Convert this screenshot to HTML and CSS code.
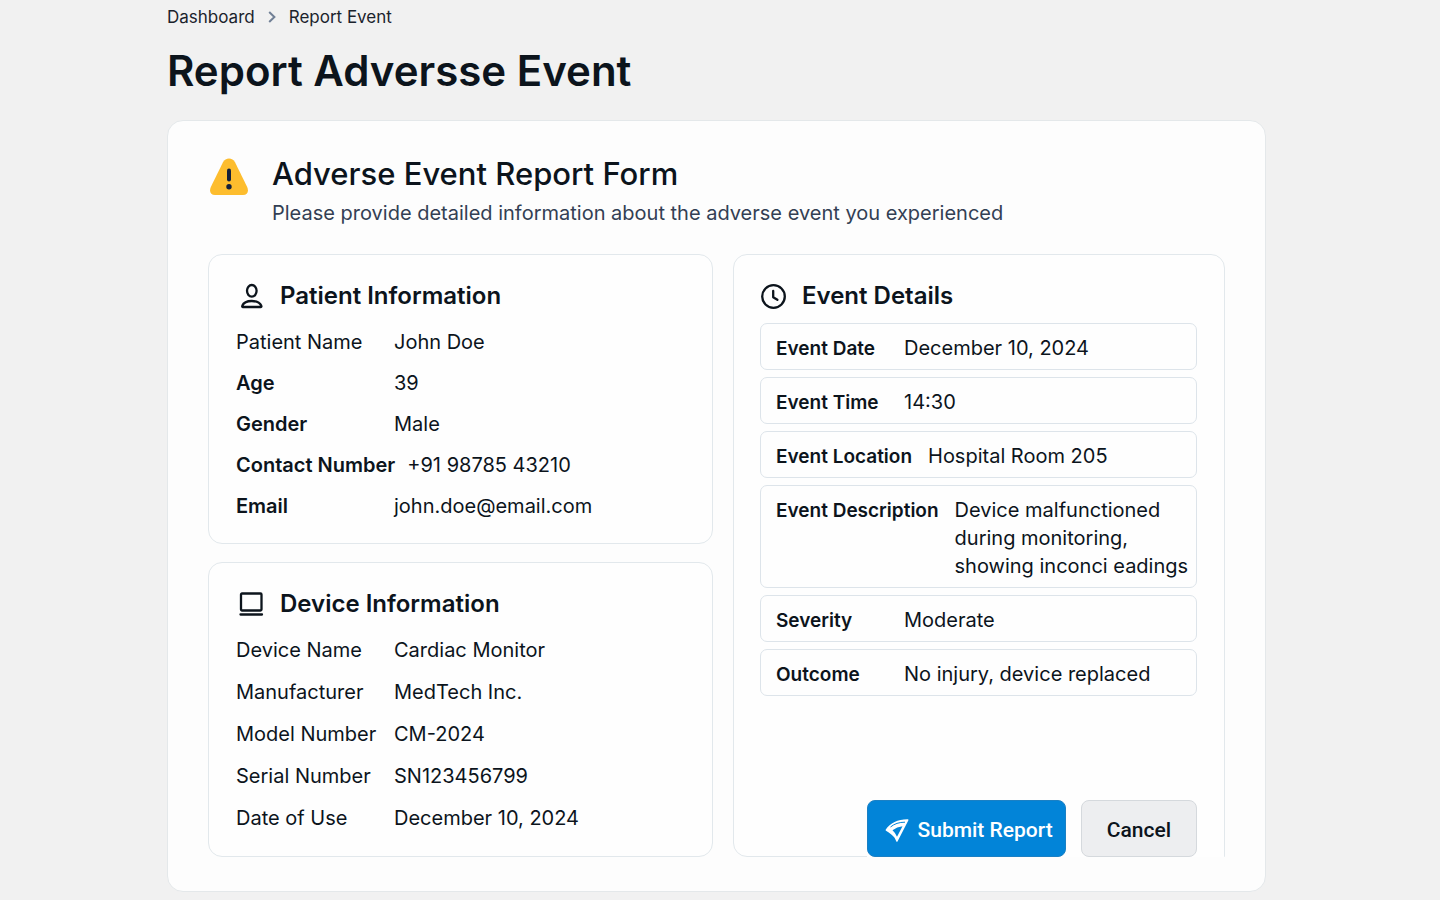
FILE: index.html
```html
<!DOCTYPE html>
<html lang="en">
<head>
<meta charset="utf-8">
<meta name="viewport" content="width=device-width, initial-scale=1">
<title>Report Adverse Event</title>
<link rel="stylesheet" href="styles.css">
</head>
<body>
<div class="page">
  <nav class="breadcrumb" aria-label="Breadcrumb">
    <a href="#">Dashboard</a>
    <svg class="breadcrumb-sep" viewBox="0 0 8 12" aria-hidden="true"><path d="M1.2 1l5.2 5-5.2 5"/></svg>
    <a href="#" aria-current="page">Report Event</a>
  </nav>
  <h1 class="page-title">Report Adversse Event</h1>

  <main class="panel">
    <header class="panel-head">
      <svg class="warning-icon" viewBox="0 0 38 38" aria-hidden="true">
        <path fill="#fdbd2e" d="M13 4.200C15.500-.6 22.500-.6 25 4.200L37.200 29C39 33.500 37.500 37 33 37H5C.5 37-1 33.500 .8 29Z"/>
        <path d="M19 12.500v9" stroke="#14203a" stroke-width="4" stroke-linecap="round"/>
        <circle cx="19" cy="28.800" r="2.700" fill="#14203a"/>
      </svg>
      <div class="panel-titles">
        <h2>Adverse Event Report Form</h2>
        <p>Please provide detailed information about the adverse event you experienced</p>
      </div>
    </header>

    <div class="columns">
      <div class="column">
        <section class="card">
          <h3 class="card-title">
            <svg class="icon" viewBox="0 0 26 26" aria-hidden="true"><ellipse cx="13.800" cy="7.800" rx="4.800" ry="5.800"/><path d="M5 24c-.7 0-1-.6-.7-1.200 1.300-3.200 5-4.800 9.500-4.800s8.200 1.600 9.500 4.800c.3.600 0 1.200-.7 1.200z"/></svg>
            Patient Information
          </h3>
          <dl class="facts facts-mixed">
            <div class="fact"><dt>Patient Name</dt><dd>John Doe</dd></div>
            <div class="fact strong"><dt>Age</dt><dd>39</dd></div>
            <div class="fact strong"><dt>Gender</dt><dd>Male</dd></div>
            <div class="fact strong"><dt>Contact Number</dt><dd>+91 98785 43210</dd></div>
            <div class="fact strong"><dt>Email</dt><dd>john.doe@email.com</dd></div>
          </dl>
        </section>

        <section class="card card-device">
          <h3 class="card-title">
            <svg class="icon" viewBox="0 0 26 26" aria-hidden="true"><rect x="3" y="2.500" width="20.500" height="17" rx="1"/><path d="M2.500 23.500h21.500"/></svg>
            Device Information
          </h3>
          <dl class="facts">
            <div class="fact"><dt>Device Name</dt><dd>Cardiac Monitor</dd></div>
            <div class="fact"><dt>Manufacturer</dt><dd>MedTech Inc.</dd></div>
            <div class="fact"><dt>Model Number</dt><dd>CM-2024</dd></div>
            <div class="fact"><dt>Serial Number</dt><dd>SN123456799</dd></div>
            <div class="fact"><dt>Date of Use</dt><dd>December 10, 2024</dd></div>
          </dl>
        </section>
      </div>

      <section class="card card-event">
        <h3 class="card-title">
          <svg class="icon" viewBox="0 0 26 26" aria-hidden="true"><circle cx="13.500" cy="13.500" r="11.300"/><path d="M13.200 8v6.200l4.200 2.600"/></svg>
          Event Details
        </h3>
        <dl class="fields">
          <div class="field"><dt>Event Date</dt><dd>December 10, 2024</dd></div>
          <div class="field"><dt>Event Time</dt><dd>14:30</dd></div>
          <div class="field"><dt>Event Location</dt><dd>Hospital Room 205</dd></div>
          <div class="field"><dt>Event Description</dt><dd>Device malfunctioned<br>during monitoring,<br>showing inconci eadings</dd></div>
          <div class="field"><dt>Severity</dt><dd>Moderate</dd></div>
          <div class="field"><dt>Outcome</dt><dd>No injury, device replaced</dd></div>
        </dl>
        <div class="actions">
          <button class="btn btn-primary" type="submit">
            <svg class="send-icon" viewBox="0 0 24 24" aria-hidden="true"><path fill="#fff" d="M.8 11.500C5 5 13.500 1 22.800 1.200Q23.800 1.400 23.300 2.500L12.500 23.500Q11.800 24.500 11.300 23.300C9.800 19.500 8 17 1 12.800Q.4 12.200 .8 11.500Z"/><path fill="#0284d8" d="M7.500 12.300Q12 8.800 17.500 8.300L12 18.800Q10.500 15 7.500 12.300Z"/><path d="M5.500 9C9.500 5.700 14 4.200 20 4.200" fill="none" stroke="#0284d8" stroke-width="1"/></svg>
            Submit Report
          </button>
          <button class="btn btn-secondary" type="button">Cancel</button>
        </div>
      </section>
    </div>
  </main>
</div>
</body>
</html>
```
FILE: styles.css
```css
* {
  box-sizing: border-box;
}

body {
  margin: 0;
  background: #f1f1f1;
  color: #0c141c;
  font-family: Inter, "Liberation Sans", sans-serif;
  font-size: 20px;
  line-height: 24px;
}

h1, h2, h3, p, dl, dd {
  margin: 0;
}

.page {
  padding: 5px 174px 8px 167px;
}

.breadcrumb {
  display: flex;
  align-items: center;
  gap: 13px;
  font-size: 17px;
}

.breadcrumb a {
  color: #1b232c;
  text-decoration: none;
}

.breadcrumb-sep {
  width: 8px;
  height: 12px;
  fill: none;
  stroke: #718096;
  stroke-width: 2;
}

.page-title {
  margin: 15px 0 22px;
  font-size: 42px;
  font-weight: 600;
  line-height: 54px;
}

.panel {
  padding: 32px 40px 34px;
  background: #fdfdfd;
  border: 1px solid #e4e8ea;
  border-radius: 16px;
}

.panel-head {
  display: flex;
  gap: 24px;
  margin-bottom: 29px;
}

.warning-icon {
  width: 38px;
  height: 38px;
  margin: 5px 0 0 2px;
}

.panel-titles h2 {
  font-size: 31px;
  font-weight: 500;
  line-height: 42px;
}

.panel-titles p {
  margin-top: 6px;
  color: #333f54;
}

.columns {
  display: grid;
  grid-template-columns: 505fr 492fr;
  gap: 20px;
}

.column {
  display: flex;
  flex-direction: column;
  gap: 18px;
}

.card {
  padding: 25px 27px;
  background: #fefefe;
  border: 1px solid #e2e8ec;
  border-radius: 14px;
}

.card-device {
  padding-bottom: 26px;
}

.card-title {
  display: flex;
  align-items: center;
  gap: 16px;
  font-size: 24px;
  font-weight: 600;
  line-height: 32px;
}

.icon {
  width: 26px;
  height: 26px;
  fill: none;
  stroke: #0c141c;
  stroke-width: 2.3;
  stroke-linecap: round;
  stroke-linejoin: round;
}

.facts {
  display: flex;
  flex-direction: column;
  gap: 18px;
  margin-top: 18px;
}

.facts-mixed {
  gap: 17px;
}

.column .card-title {
  padding-left: 2px;
}

.fact {
  display: flex;
  gap: 12px;
}

.fact dt {
  min-width: 146px;
}

.strong dt,
.field dt {
  font-weight: 600;
}

.card-event {
  display: flex;
  flex-direction: column;
  padding: 25px 27px 0 26px;
  border-bottom-right-radius: 0;
}

.fields {
  display: flex;
  flex-direction: column;
  gap: 7px;
  margin-top: 11px;
}

.field {
  display: flex;
  align-items: baseline;
  gap: 16px;
  padding: 10px 4px 7px 15px;
  line-height: 28px;
  border: 1px solid #dde4ea;
  border-radius: 7px;
}

.field dt {
  min-width: 112px;
  font-size: 19px;
  line-height: 26px;
  white-space: nowrap;
}

.actions {
  display: flex;
  gap: 15px;
  align-self: flex-end;
  margin: auto -27px -1px 0;
  padding-right: 27px;
  background: #fefefe;
}

.btn {
  display: flex;
  align-items: center;
  justify-content: center;
  height: 57px;
  padding: 2px 25px 0;
  border-radius: 8px;
  font-family: Roboto, sans-serif;
  font-size: 21px;
  font-weight: 500;
}

.btn-primary {
  gap: 9px;
  padding: 2px 12px 0 17px;
  color: #fff;
  background: #0284d8;
  border: 1px solid #1b80c4;
}

.btn-secondary {
  color: #0c141c;
  background: #edeef0;
  border: 1px solid #d5d9dd;
}

.send-icon {
  width: 24px;
  height: 24px;
}
```
